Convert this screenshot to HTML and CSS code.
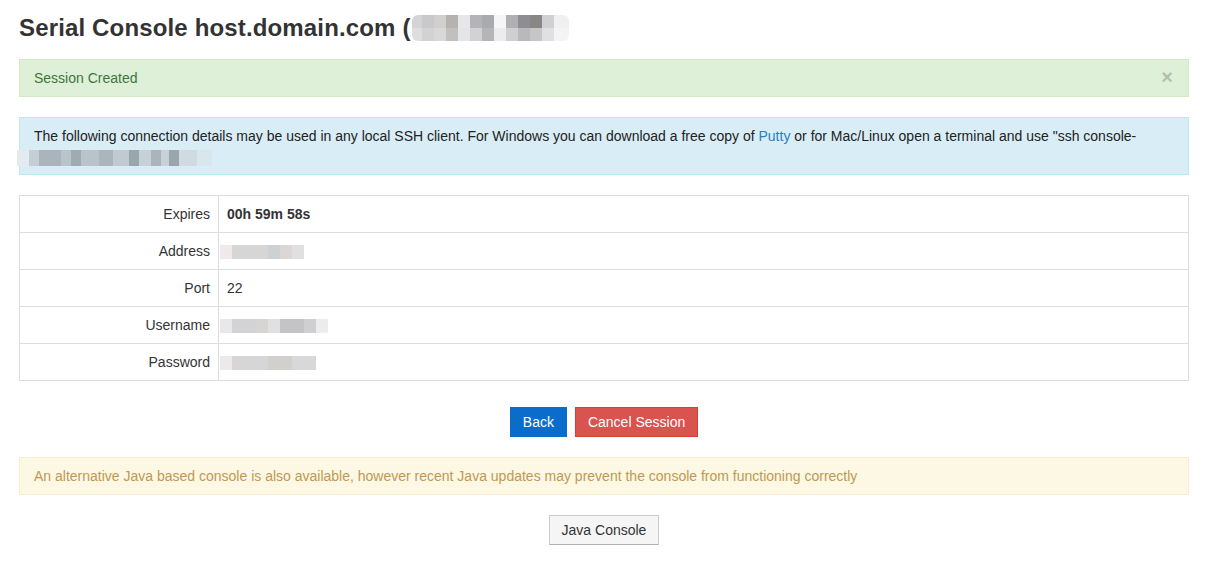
FILE: index.html
```html
<!DOCTYPE html>
<html>
<head>
<meta charset="utf-8">
<link rel="stylesheet" href="styles.css">
</head>
<body>
<div class="container">
  <h1 class="title">Serial Console host.domain.com (<span class="mosaic mosaic-title"></span></h1>

  <div class="alert alert-success">
    <span>Session Created</span>
    <span class="close">&times;</span>
  </div>

  <div class="alert alert-info">
    The following connection details may be used in any local SSH client. For Windows you can download a free copy of <a href="#" class="link">Putty</a> or for Mac/Linux open a terminal and use "ssh console-<br><span class="mosaic mosaic-info"></span>
  </div>

  <table class="details">
    <tr><th>Expires</th><td class="strong">00h 59m 58s</td></tr>
    <tr><th>Address</th><td><span class="mosaic mosaic-addr"></span></td></tr>
    <tr><th>Port</th><td>22</td></tr>
    <tr><th>Username</th><td><span class="mosaic mosaic-user"></span></td></tr>
    <tr><th>Password</th><td><span class="mosaic mosaic-pass"></span></td></tr>
  </table>

  <div class="actions">
    <button class="btn btn-primary">Back</button>
    <button class="btn btn-danger">Cancel Session</button>
  </div>

  <div class="alert alert-warning">
    An alternative Java based console is also available, however recent Java updates may prevent the console from functioning correctly
  </div>

  <div class="actions">
    <button class="btn btn-default">Java Console</button>
  </div>
</div>
</body>
</html>
```

FILE: styles.css
```css
* { box-sizing: border-box; }
html, body { margin: 0; padding: 0; background: #fff; }
body {
  font-family: "Liberation Sans", Arial, sans-serif;
  font-size: 14px;
  line-height: 20px;
  color: #333;
}
.container {
  width: 1170px;
  margin-left: 19px;
}
.title {
  font-size: 24px;
  font-weight: bold;
  line-height: 28px;
  margin: 14px 0 17px;
  color: #333;
  display: flex;
  align-items: center;
  white-space: nowrap;
  letter-spacing: 0.15px;
}
.mosaic { display: inline-block; vertical-align: middle; }
.mosaic-title {
  width: 157px;
  height: 26px;
  margin-left: 1px;
  border-radius: 6px;
  background:
    linear-gradient(90deg, #d4d4d6 0 10px, #c9c9cb 10px 22px, #d2d0ce 22px 34px, #b6b2b0 34px 46px, #e7e7ea 46px 58px, #b3b3b8 58px 70px, #a9aaad 70px 82px, #f5f5f6 82px 94px, #b0b0b2 94px 106px, #8d8d92 106px 118px, #8a8686 118px 130px, #d0d0d2 130px 142px, #f0f0f0 142px) top / 100% 13px no-repeat,
    linear-gradient(90deg, #dedede 0 10px, #d2d2d4 10px 22px, #d8d8d8 22px 34px, #c3bfbd 34px 46px, #e5e5e7 46px 58px, #d2d2d5 58px 70px, #b5b5b7 70px 82px, #ececee 82px 94px, #cfcfd2 94px 106px, #b9b9bc 106px 118px, #c6c6c8 118px 130px, #e0e0e2 130px 142px, #f4f4f4 142px) bottom / 100% 13px no-repeat;
}
.alert {
  border: 1px solid transparent;
  padding: 8px 14px;
  margin-bottom: 20px;
}
.alert-success {
  background: #dff0d8;
  border-color: #d6e9c6;
  color: #3c763d;
  display: flex;
  justify-content: space-between;
  align-items: center;
}
.close {
  font-size: 20px;
  font-weight: bold;
  color: #000;
  opacity: .2;
  line-height: 18px;
  margin-top: -2px;
  margin-right: 1px;
}
.alert-info {
  background: #d9edf7;
  border-color: #bce8f1;
  color: #222;
}
.link { color: #2a7fc1; text-decoration: none; }
.mosaic-info {
  width: 195px;
  height: 16px;
  margin-left: -17px;
  margin-top: 1px;
  background: linear-gradient(90deg, #e4eaee 0 12px, #c5ced4 12px 22px, #a9b4bd 22px 44px, #b8c3ca 44px 54px, #9fabb3 54px 64px, #b9c3ca 64px 82px, #aab5bc 82px 96px, #c0cad0 96px 112px, #98a6ae 112px 122px, #c6d0d6 122px 134px, #a9b4bb 134px 144px, #c7d1d7 144px 152px, #9aa6ae 152px 162px, #d0dbe1 162px 180px, #d8e6ee 180px);
}
.details {
  width: 100%;
  border-collapse: collapse;
  border: 1px solid #ddd;
  margin-bottom: 26px;
}
.details th, .details td {
  padding: 8px;
  line-height: 20px;
  border-top: 1px solid #ddd;
  text-align: left;
  vertical-align: middle;
  height: 37px;
}
.details th {
  width: 199px;
  font-weight: normal;
  text-align: right;
  border-right: 1px solid #ddd;
}
.details td.strong { font-weight: bold; }
.mosaic-addr {
  width: 84px;
  height: 14px;
  margin-left: -7px;
  background: linear-gradient(90deg, #efe9ea 0 12px, #d6d6d6 12px 48px, #cdd1d4 48px 60px, #dcd6d7 60px 72px, #e0e0e0 72px 84px);
}
.mosaic-user {
  width: 108px;
  height: 14px;
  margin-left: -7px;
  background: linear-gradient(90deg, #e8e8e8 0 12px, #d3d3d5 12px 36px, #d8d4d4 36px 48px, #e0e0e0 48px 60px, #c4c4c6 60px 84px, #cfcfd1 84px 96px, #ececec 96px 108px);
}
.mosaic-pass {
  width: 96px;
  height: 14px;
  margin-left: -7px;
  background: linear-gradient(90deg, #ebe9ea 0 12px, #d6d6d6 12px 48px, #d2d0cc 48px 72px, #d8d8d8 72px 96px);
}
.actions {
  display: flex;
  justify-content: center;
  gap: 8px;
  margin-bottom: 20px;
}
.btn {
  font-family: "Liberation Sans", Arial, sans-serif;
  font-size: 14px;
  line-height: 18px;
  height: 30px;
  padding: 5px 12px;
  border: 1px solid transparent;
  border-radius: 0;
  cursor: pointer;
}
.btn-primary { background: #0a6dcc; border-color: #0a6dcc; color: #fff; }
.btn-danger { background: #d9534f; border-color: #d43f3a; color: #fff; }
.btn-default {
  background: #f5f5f5;
  border-color: #ccc;
  border-bottom-color: #b3b3b3;
  color: #333;
}
.alert-warning {
  background: #fcf8e3;
  border-color: #faebcc;
  color: #c09853;
}
```
